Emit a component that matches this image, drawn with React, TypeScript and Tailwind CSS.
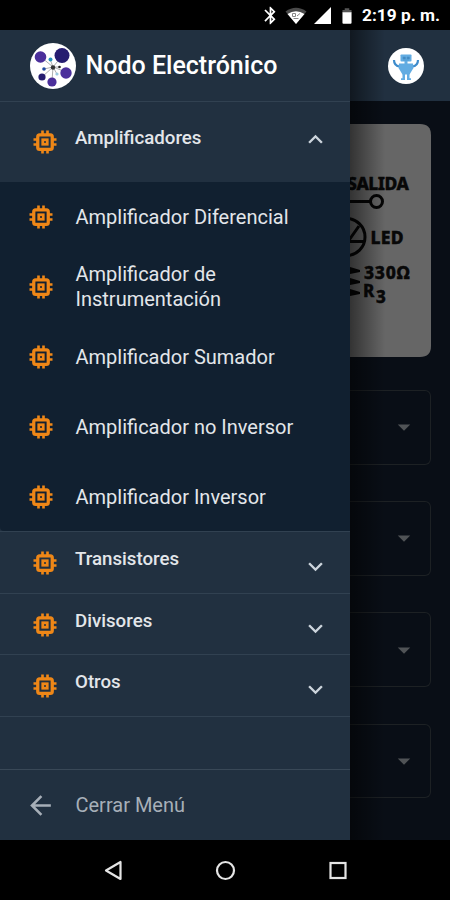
import { MdExpandLess, MdExpandMore, MdArrowBack, MdArrowDropDown, MdBluetooth } from "react-icons/md";

const amplifiers = [
  "Amplificador Diferencial",
  "Amplificador de Instrumentación",
  "Amplificador Sumador",
  "Amplificador no Inversor",
  "Amplificador Inversor",
];

const categories = [
  { name: "Transistores", height: "h-[62px]" },
  { name: "Divisores", height: "h-[61px]" },
  { name: "Otros", height: "h-[62px]" },
];

const ChipIcon = ({ className }: { className?: string }) => (
  <svg className={`w-[30px] h-[30px] shrink-0 text-[#ef8717] ${className ?? ""}`} viewBox="0 0 24 24" fill="none" stroke="currentColor">
    <rect x="6.200" y="6.200" width="11.600" height="11.600" rx="1.500" strokeWidth="2.600" />
    <rect x="10.200" y="10.200" width="3.600" height="3.600" strokeWidth="2.200" />
    <path d="M10 2.800v3M14 2.800v3M10 18.200v3M14 18.200v3M2.800 10h3M2.800 14h3M18.200 10h3M18.200 14h3" strokeWidth="2.100" />
  </svg>
);

const StatusBar = () => (
  <div className="h-[30px] bg-black flex items-center justify-end pr-[10px] pt-px text-white">
    <MdBluetooth className="w-[21px] h-[21px] mr-[4px]" />
    <svg className="w-[22px] h-[18px] mr-[7px]" viewBox="0 0 22 18">
      <path d="M0.5 4.5Q11 -3 21.5 4.5L11 17z" fill="#4a4a4a" />
      <path d="M2.500 7Q11 1.5 19.500 7L11 17z" fill="#fff" />
      <path d="M7.500 6.500h3v3h-3zM12 9l3-2.500M8.500 11.500h5" stroke="#888" strokeWidth="1" fill="none" />
    </svg>
    <svg className="w-[17px] h-[17px] mr-[11px]" viewBox="0 0 17 17">
      <path d="M17 0v17H0z" fill="#fff" />
    </svg>
    <svg className="w-[10px] h-[16px] mr-[10px]" viewBox="0 0 11 17">
      <path d="M3 0h5v2h2.5v3H.5V2H3z" fill="#555" />
      <path d="M.5 4.500h10V16q0 1-1 1h-8q-1 0-1-1z" fill="#fff" />
    </svg>
    <span className="text-[17.3px] leading-none font-bold whitespace-nowrap">2:19 p. m.</span>
  </div>
);

const Logo = () => (
  <svg className="w-[46px] h-[46px] shrink-0" viewBox="0 0 46 46">
    <circle cx="23" cy="23" r="23" fill="#fff" />
    <path d="M23 24L11 14M23 24L32 13M23 24L20 16M23 24L14 26M23 24L12 34M23 24L22 38M23 24L36 29M23 24L29 24M23 24L27 31" stroke="#999" strokeWidth="0.8" />
    <circle cx="10.500" cy="14" r="5.800" fill="#4b2f9b" />
    <circle cx="32" cy="12.500" r="7.500" fill="#261c70" />
    <circle cx="36" cy="30" r="5.700" fill="#4b2f9b" />
    <circle cx="22" cy="39" r="4.600" fill="#4b2f9b" />
    <circle cx="12" cy="34" r="3.600" fill="#261c70" />
    <circle cx="20.500" cy="16.500" r="2" fill="#2492bd" />
    <circle cx="14" cy="26" r="1.800" fill="#204aa0" />
    <circle cx="23" cy="24.500" r="2.200" fill="#333" />
    <circle cx="29.500" cy="24" r="1.300" fill="#222" />
    <circle cx="27" cy="31" r="1.600" fill="#9bc9df" />
  </svg>
);

const Robot = () => (
  <svg className="w-[36px] h-[36px]" viewBox="0 0 36 36">
    <circle cx="18" cy="18" r="18" fill="#fff" />
    <path d="M12 18.500Q6 18 6 12M24 18.500Q30 18 30 12" stroke="#3d8bcc" strokeWidth="2.200" fill="none" />
    <g fill="#62ace2">
      <rect x="12.500" y="6.500" width="11" height="7" rx="0.800" />
      <path d="M16.500 13h3v3h-3z" />
      <path d="M11 15.500h14l.5 4.500-4 6.500h-7l-4-6.500z" />
      <path d="M14.500 25h2.500v7h-4v-1.800h1.500zM19 25h2.500v5.200H23V32h-4z" />
    </g>
    <path d="M15 9h2.500v2H15zM19 9h2.500v2H19zM15 12h6" fill="#3f87c0" stroke="#4b93cb" strokeWidth="0.600" />
  </svg>
);

const Circuit = () => (
  <svg className="w-[81px] h-[233px]" viewBox="0 0 81 233" fontFamily="'Noto Sans', sans-serif" fontWeight="800">
    <path d="M-10 0H70Q81 0 81 11V222Q81 233 70 233H-10z" fill="#666" />
    <g fill="none" stroke="#050505" strokeWidth="3">
      <path d="M0 77.500H20" />
      <circle cx="26.500" cy="77.500" r="6" />
      <circle cx="-3.500" cy="113" r="18.500" />
      <path d="M-3 119L9 102M0 117.500H14" />
    </g>
    <path d="M0 143L10 146L10 148L0 150zM0 154L10 157L10 159L0 161zM0 165L10 168L10 170L0 172z" fill="#050505" />
    <g fill="#080808" stroke="#080808" strokeWidth="0.400">
      <text x="-3" y="65.500" fontSize="17.500" textLength="62">SALIDA</text>
      <text x="20.500" y="119.500" fontSize="17.500" textLength="33">LED</text>
      <text x="14" y="154.500" fontSize="17.500" textLength="46">330Ω</text>
      <text x="13" y="172.500" fontSize="17">R<tspan x="26" y="178.500">3</tspan></text>
    </g>
  </svg>
);

const Drawer = () => (
  <aside className="w-[350px] h-full flex flex-col bg-[#213040] text-[#e3e6ea]">
    <div className="h-[72px] flex items-center pl-[30px] gap-[9.5px] border-b border-[#314151]">
      <Logo />
      <h1 className="text-[25px] font-medium text-white whitespace-nowrap">Nodo Electrónico</h1>
    </div>

    <div className="h-[80px] flex pl-[30px] pr-5">
      <ChipIcon className="mt-[25px]" />
      <span className="flex-1 ml-[15px] mt-[23px] text-[18.7px] leading-[26px] font-medium">Amplificadores</span>
      <MdExpandLess className="w-[29px] h-[29px] mt-[22.5px] text-[#ccd4dc]" />
    </div>

    <ul className="h-[349px] bg-[#112030] rounded-bl-[4px]">
      {amplifiers.map((name) => (
        <li key={name} className="h-[70px] flex items-center pl-[25.5px] pr-10">
          <ChipIcon />
          <span className="ml-[20px] text-[20px] leading-[25px]">{name}</span>
        </li>
      ))}
    </ul>

    {categories.map(({ name, height }) => (
      <div key={name} className={`${height} flex pl-[30px] pr-5 border-t border-[#314151]`}>
        <ChipIcon className="mt-[15.5px]" />
        <span className="flex-1 ml-[15px] mt-[13.5px] text-[18.7px] leading-[26px] font-medium">{name}</span>
        <MdExpandMore className="w-[29px] h-[29px] mt-[20px] text-[#ccd4dc]" />
      </div>
    ))}
    <div className="flex-1 border-t border-[#314151]" />

    <div className="h-[71px] flex items-center pl-[25px] border-t border-[#394857] text-[#a7afb8]">
      <MdArrowBack className="w-[31px] h-[31px]" />
      <span className="ml-[19.5px] text-[20px]">Cerrar Menú</span>
    </div>
  </aside>
);

const Content = () => (
  <main className="relative w-[100px] h-full flex flex-col bg-[#090e16]">
    <div className="h-[71px] flex items-center pl-[37.500px] pt-px bg-[#213040]">
      <Robot />
    </div>
    <div className="mt-[23px] h-[233px]">
      <Circuit />
    </div>
    <div className="mt-[33px] flex flex-col gap-[36.7px]">
      {[1, 2, 3, 4].map((field) => (
        <div key={field} className="w-[81px] h-[74.500px] flex items-center justify-end pr-[11px] border border-l-0 border-[#1d2124] rounded-r-[6px]">
          <MdArrowDropDown className="w-[30px] h-[30px] text-[#505356]" />
        </div>
      ))}
    </div>
    <div className="absolute inset-y-0 left-0 w-[35px] bg-linear-to-r from-black/50 to-transparent" />
  </main>
);

const NavigationBar = () => (
  <div className="h-[60px] bg-black flex items-center justify-center">
    <svg className="w-[250px] h-6" viewBox="0 0 250 24" fill="none" stroke="#e5e5e5" strokeWidth="2.200">
      <path d="M20.500 4v17L6 12.500z" strokeLinejoin="round" />
      <circle cx="125.500" cy="12.500" r="8.500" />
      <rect x="230.500" y="5" width="15" height="15" />
    </svg>
  </div>
);

const App = () => {
  return (
    <div className="w-[450px] h-[900px] flex flex-col overflow-hidden bg-black font-['Roboto',sans-serif]">
      <StatusBar />
      <div className="h-[810px] flex">
        <Drawer />
        <Content />
      </div>
      <NavigationBar />
    </div>
  );
};

export default App;
